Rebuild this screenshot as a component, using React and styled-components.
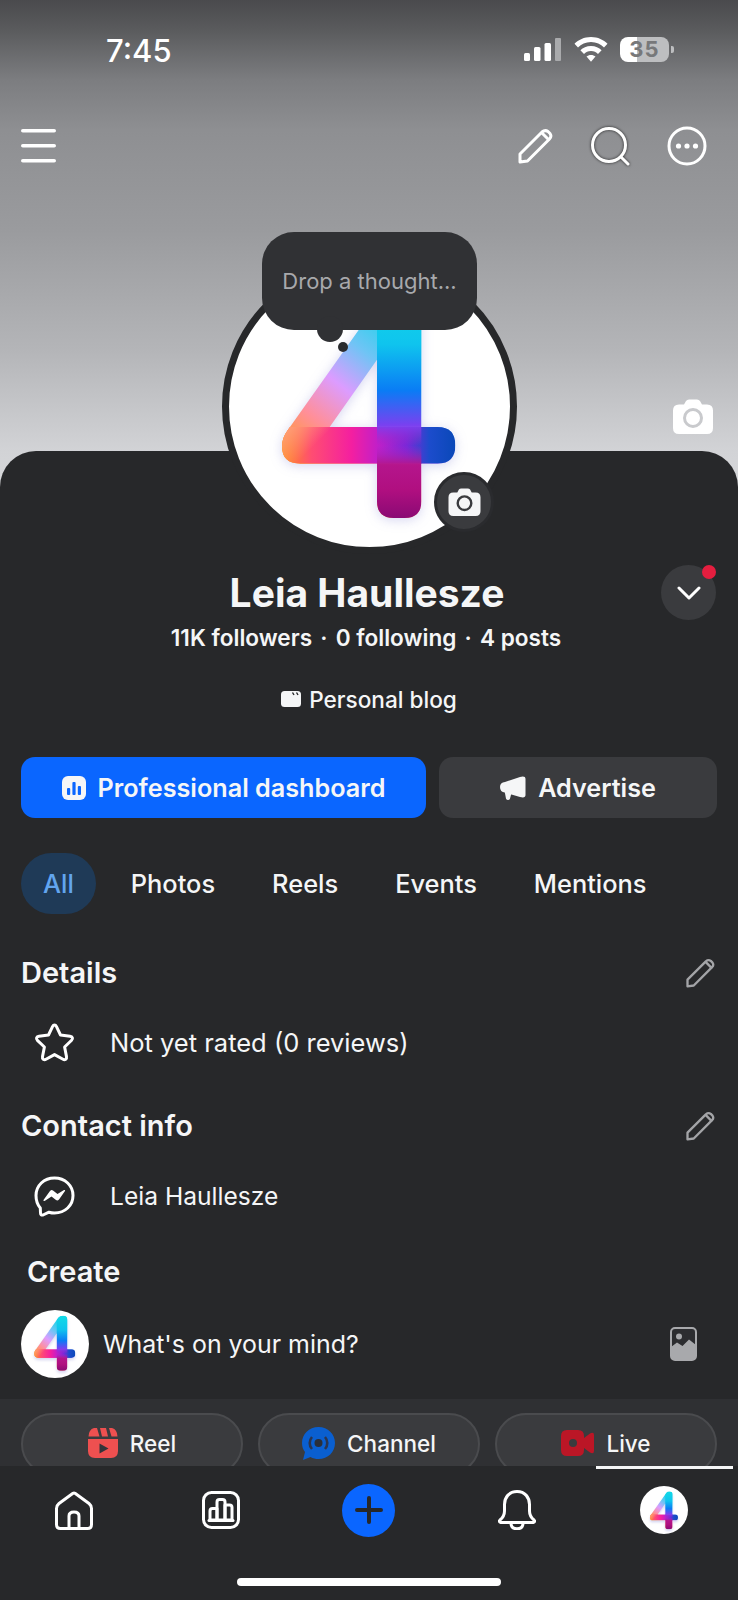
import React, { useId } from "react";
import styled, { createGlobalStyle } from "styled-components";

const SHEET = "#27282a";

const Global = createGlobalStyle`
  html, body { margin: 0; padding: 0; background: ${SHEET}; }
  * { box-sizing: border-box; }
  body { font-family: Inter, "Liberation Sans", sans-serif; -webkit-font-smoothing: antialiased; }
`;

const Page = styled.div`
  position: relative;
  width: 738px;
  height: 1600px;
  overflow: hidden;
  display: flex;
  flex-direction: column;
  background: ${SHEET};
  color: #f5f6f7;
`;

const Hero = styled.header`
  height: 487px;
  flex: none;
  background: linear-gradient(180deg, #4a4a4d 0, #5a5b5d 30px, #7c7d80 80px, #8e8f92 130px, #9a9b9e 230px, #b4b5b8 350px, #d2d3d6 451px, #d6d7da 487px);
`;

const StatusBar = styled.div`
  height: 100px;
  padding: 33px 69px 0 106px;
  display: flex;
  justify-content: space-between;
  align-items: flex-start;
`;

const Time = styled.div`
  font-size: 31px;
  line-height: 36px;
  font-weight: 500;
  color: #fff;
`;

const StatusIcons = styled.div`
  display: flex;
  align-items: flex-start;
  margin-top: 4px;
`;

const Signal = styled.svg`
  width: 38px;
  height: 24px;
  margin-top: 1px;
  margin-right: 13px;
`;

const Wifi = styled.svg`
  width: 34px;
  height: 25px;
  margin-right: 12px;
`;

const Battery = styled.div`
  position: relative;
  width: 49px;
  height: 25px;
  border-radius: 8px;
  background: linear-gradient(90deg, #fff 0, #fff 17px, #bdbec0 17px, #bdbec0 100%);
  color: #77787a;
  font-size: 22px;
  line-height: 25px;
  font-weight: 700;
  text-align: center;
  letter-spacing: 1px;
  &::after {
    content: "";
    position: absolute;
    right: -5px;
    top: 9px;
    width: 3px;
    height: 7px;
    border-radius: 0 2px 2px 0;
    background: #bdbec0;
  }
`;

const Toolbar = styled.div`
  height: 40px;
  padding: 0 31px 0 21px;
  margin-top: 26px;
  display: flex;
  align-items: center;
`;

const ToolIcons = styled.div`
  margin-left: auto;
  display: flex;
  align-items: center;
  gap: 37px;
`;

const SearchSvg = styled.svg`
  width: 40px;
  height: 40px;
  filter: drop-shadow(0 0 1.5px rgba(0, 0, 0, 0.75));
`;

const HeroCamera = styled.div`
  position: absolute;
  left: 673px;
  top: 399px;
`;

const Avatar = styled.div`
  position: absolute;
  left: 222px;
  top: 259px;
  width: 295px;
  height: 295px;
  padding: 0 2px 8px 0;
  border-radius: 50%;
  border: 7px solid ${SHEET};
  background: #fff;
  display: flex;
  align-items: center;
  justify-content: center;
`;

const CameraBadge = styled.div`
  position: absolute;
  left: 205px;
  top: 206px;
  width: 60px;
  height: 60px;
  border-radius: 50%;
  background: #3a3b3e;
  border: 3px solid #2a2b2e;
  display: flex;
  align-items: center;
  justify-content: center;
`;

const Bubble = styled.div`
  position: absolute;
  left: 262px;
  top: 232px;
  width: 215px;
  height: 98px;
  border-radius: 32px;
  background: #303134;
  color: #a8a9ac;
  font-size: 22px;
  display: flex;
  align-items: center;
  justify-content: center;
  &::before {
    content: "";
    position: absolute;
    left: 55px;
    bottom: -12px;
    width: 26px;
    height: 26px;
    border-radius: 50%;
    background: #303134;
  }
  &::after {
    content: "";
    position: absolute;
    left: 76px;
    top: 110px;
    width: 10px;
    height: 10px;
    border-radius: 50%;
    background: #2a2b2e;
  }
`;

const Sheet = styled.main`
  flex: 1;
  position: relative;
  margin-top: -36px;
  border-radius: 36px 36px 0 0;
  background: ${SHEET};
  padding: 119px 21px 0;
  display: flex;
  flex-direction: column;
`;

const NameBlock = styled.div`
  position: relative;
  padding-right: 4px;
  text-align: center;
`;

const Name = styled.h1`
  margin: 0;
  font-size: 39px;
  line-height: 46px;
  font-weight: 700;
  color: #f5f6f7;
`;

const MenuButton = styled.div`
  position: absolute;
  right: 1px;
  top: -5px;
  width: 55px;
  height: 55px;
  border-radius: 50%;
  background: #3a3b3e;
  display: flex;
  align-items: center;
  justify-content: center;
  &::after {
    content: "";
    position: absolute;
    right: 0;
    top: 0;
    width: 14px;
    height: 14px;
    border-radius: 50%;
    background: #e41e3f;
  }
`;

const Stats = styled.div`
  margin-top: 8px;
  padding-right: 6px;
  font-size: 22.6px;
  line-height: 28px;
  font-weight: 600;
  text-align: center;
  white-space: nowrap;
`;

const Sep = styled.span`
  margin: 0 2.5px;
`;

const Category = styled.div`
  margin-top: 33px;
  height: 28px;
  display: flex;
  justify-content: center;
  align-items: center;
  gap: 8px;
  font-size: 22.6px;
  font-weight: 500;
`;

const Actions = styled.div`
  margin-top: 44px;
  display: grid;
  grid-template-columns: 405px 278px;
  gap: 13px;
`;

const ActionButton = styled.div`
  height: 61px;
  border-radius: 14px;
  background: ${(p) => (p.$primary ? "#0a66ff" : "#3a3b3e")};
  display: flex;
  align-items: center;
  justify-content: center;
  gap: 12px;
  font-size: 25.2px;
  font-weight: 600;
  color: #f5f6f7;
`;

const Tabs = styled.nav`
  margin-top: 35px;
  display: flex;
  gap: 13px;
`;

const Tab = styled.div`
  height: 61px;
  padding: 0 22px;
  border-radius: 31px;
  display: flex;
  align-items: center;
  font-size: 25.4px;
  font-weight: 500;
  background: ${(p) => (p.$active ? "#1f3a57" : "transparent")};
  color: ${(p) => (p.$active ? "#62a5ef" : "#f5f6f7")};
`;

const SectionHead = styled.div`
  margin-top: ${(p) => p.$top}px;
  height: 36px;
  padding: 0 2px 0 0;
  display: flex;
  align-items: center;
  justify-content: space-between;
`;

const SectionTitle = styled.h2`
  margin: 0;
  font-size: 29px;
  line-height: 36px;
  font-weight: 600;
  color: #f5f6f7;
`;

const InfoRow = styled.div`
  margin-top: ${(p) => p.$top}px;
  height: 44px;
  padding-left: 13px;
  display: flex;
  align-items: center;
  gap: 35px;
  font-size: ${(p) => p.$fs}px;
  font-weight: 400;
`;

const CreateTitle = styled(SectionTitle)`
  margin-top: 36px;
  padding-left: 6px;
`;

const Composer = styled.div`
  margin-top: 19px;
  height: 69px;
  padding-right: 20px;
  display: flex;
  align-items: center;
  gap: 14px;
  font-size: 24.9px;
`;

const SmallAvatar = styled.div`
  width: ${(p) => p.$size}px;
  height: ${(p) => p.$size}px;
  border-radius: 50%;
  background: #fff;
  display: flex;
  align-items: center;
  justify-content: center;
  flex: none;
`;

const GalleryWrap = styled.div`
  margin-left: auto;
  display: flex;
`;

const Strip = styled.section`
  flex: none;
  height: 67px;
  padding: 14px 21px 0;
  background: #2f3033;
  overflow: hidden;
  display: grid;
  grid-template-columns: repeat(3, 222px);
  gap: 15px;
`;

const Pill = styled.div`
  height: 62px;
  border-radius: 36px;
  background: #3a3b3e;
  border: 2px solid #4a4b4e;
  display: flex;
  align-items: center;
  justify-content: center;
  gap: 12px;
  font-size: 22.5px;
  font-weight: 500;
  padding-bottom: 2px;
`;

const BottomNav = styled.footer`
  position: relative;
  flex: none;
  height: 134px;
  background: ${SHEET};
  &::after {
    content: "";
    position: absolute;
    right: 5px;
    top: 0;
    width: 137px;
    height: 3px;
    background: #f5f6f7;
  }
`;

const NavGrid = styled.div`
  height: 88px;
  display: grid;
  grid-template-columns: repeat(5, 1fr);
`;

const NavItem = styled.div`
  display: flex;
  align-items: center;
  justify-content: center;
`;

const PlusCircle = styled.div`
  width: 53px;
  height: 53px;
  border-radius: 50%;
  background: #0a66ff;
  display: flex;
  align-items: center;
  justify-content: center;
`;

const HomeBar = styled.div`
  width: 264px;
  height: 8px;
  margin: 24px auto 0;
  border-radius: 4px;
  background: #fff;
`;

const FourSvg = styled.svg`
  height: ${(p) => p.$h}px;
  width: ${(p) => (p.$h * 550) / 720}px;
  display: block;
  overflow: visible;
  filter: drop-shadow(0 2px ${(p) => p.$h / 40}px rgba(90, 90, 200, 0.25));
`;

function Four({ h }) {
  const id = "f" + useId().replace(/[^a-zA-Z0-9]/g, "");
  return (
    <FourSvg $h={h} viewBox="230 190 550 720">
      <defs>
        <clipPath id={id + "c"}>
          <path clipRule="evenodd" d="M610 200 Q663 200 663 250 L663 622 L712 622 Q765 622 765 677 Q765 732 712 732 L663 732 L663 845 Q663 895 613 895 L580 895 Q530 895 530 845 L530 732 L300 732 Q245 732 245 680 Q245 655 262 632 L550 225 Q570 200 610 200 Z M388 622 L530 622 L530 420 Z" />
        </clipPath>
        <linearGradient id={id + "s"} x1="0" y1="200" x2="0" y2="895" gradientUnits="userSpaceOnUse">
          <stop offset="0" stopColor="#12dbe6" />
          <stop offset="0.25" stopColor="#0fc4ee" />
          <stop offset="0.45" stopColor="#0a7cf5" />
          <stop offset="0.6" stopColor="#7a40f0" />
          <stop offset="0.687" stopColor="#a028c8" stopOpacity="0" />
          <stop offset="0.77" stopColor="#b5158c" />
          <stop offset="0.88" stopColor="#b00f80" />
          <stop offset="1" stopColor="#8a0a74" />
        </linearGradient>
        <linearGradient id={id + "d"} x1="250" y1="680" x2="560" y2="290" gradientUnits="userSpaceOnUse">
          <stop offset="0" stopColor="#ff9a2e" />
          <stop offset="0.25" stopColor="#ff8f9a" />
          <stop offset="0.5" stopColor="#dc9cff" />
          <stop offset="0.75" stopColor="#6fc4f5" />
          <stop offset="1" stopColor="#20d4ea" />
        </linearGradient>
        <linearGradient id={id + "b"} x1="245" y1="0" x2="765" y2="0" gradientUnits="userSpaceOnUse">
          <stop offset="0" stopColor="#ff8f1f" />
          <stop offset="0.17" stopColor="#ff4d72" />
          <stop offset="0.4" stopColor="#f41fa0" />
          <stop offset="0.55" stopColor="#c21fc8" />
          <stop offset="0.72" stopColor="#7a28d8" />
          <stop offset="0.85" stopColor="#1c4ccc" />
          <stop offset="1" stopColor="#0a48b8" />
        </linearGradient>
        <linearGradient id={id + "p"} x1="300" y1="600" x2="420" y2="720" gradientUnits="userSpaceOnUse">
          <stop offset="0" stopColor="#ffa080" stopOpacity="0.8" />
          <stop offset="0.5" stopColor="#ffa080" stopOpacity="0" />
        </linearGradient>
      </defs>
      <g clipPath={`url(#${id}c)`}>
        <rect x="230" y="190" width="550" height="720" fill={`url(#${id}d)`} />
        <rect x="240" y="622" width="530" height="110" fill={`url(#${id}b)`} />
        <rect x="240" y="622" width="300" height="110" fill={`url(#${id}p)`} />
        <rect x="530" y="190" width="133" height="720" fill={`url(#${id}s)`} />
      </g>
    </FourSvg>
  );
}

const Stroke = styled.svg`
  display: block;
  width: ${(p) => p.$w}px;
  height: ${(p) => p.$h}px;
  fill: none;
  stroke: ${(p) => p.$c || "#fff"};
  stroke-width: ${(p) => p.$sw || 3};
  stroke-linecap: round;
  stroke-linejoin: round;
`;

const Pencil = ({ w = 36, h = 36, c, sw }) => (
  <Stroke $w={w} $h={h} $c={c} $sw={sw} viewBox="0 0 36 36">
    <path d="M3 26 L25 4 Q28 1.5 31 3.5 L33 5.5 Q35 8.5 32.5 11 L10.5 33 L3 34 Z" />
    <path d="M25 5 L31.5 11.5" />
  </Stroke>
);

const Camera = ({ w, h, body, ring }) => (
  <svg width={w} height={h} viewBox="0 0 40 35">
    <path fill={body} d="M6 5.5 H11 L13 2 Q14 0.5 16 0.5 H24 Q26 0.5 27 2 L29 5.5 H34 Q40 5.5 40 11.5 V29 Q40 35 34 35 H6 Q0 35 0 29 V11.5 Q0 5.5 6 5.5 Z" />
    <circle cx="20" cy="19" r="8.5" fill="none" stroke={ring} strokeWidth="3" />
  </svg>
);

export default function App() {
  return (
    <Page>
      <Global />
      <Hero>
        <StatusBar>
          <Time>7:45</Time>
          <StatusIcons>
            <Signal viewBox="0 0 38 24">
              <rect x="1" y="15" width="6" height="8" rx="1.5" fill="#fff" />
              <rect x="11" y="9" width="6.5" height="14" rx="1.5" fill="#fff" />
              <rect x="21.5" y="5" width="6.5" height="18" rx="1.5" fill="#fff" />
              <rect x="32" y="0" width="6" height="23" rx="1" fill="#a9aaac" />
            </Signal>
            <Wifi viewBox="0 0 34 25">
              <path fill="#fff" d="M17 0 C24 0 29.5 2.8 33.5 6.8 L30 10.4 C26.8 7.2 22.4 5 17 5 C11.6 5 7.2 7.2 4 10.4 L0.5 6.8 C4.5 2.8 10 0 17 0 Z" />
              <path fill="#fff" d="M17 9 C21.5 9 25 10.8 27.6 13.3 L24 16.9 C22.2 15.2 20 14 17 14 C14 14 11.8 15.2 10 16.9 L6.4 13.3 C9 10.8 12.5 9 17 9 Z" />
              <path fill="#fff" d="M17 18 C18.8 18 20.3 18.6 21.5 19.6 L17 24.8 L12.5 19.6 C13.7 18.6 15.2 18 17 18 Z" />
            </Wifi>
            <Battery>35</Battery>
          </StatusIcons>
        </StatusBar>
        <Toolbar>
          <svg width="35" height="34" viewBox="0 0 35 34">
            <rect x="0" y="0" width="35" height="3.6" rx="1.8" fill="#fff" />
            <rect x="0" y="15" width="35" height="3.6" rx="1.8" fill="#fff" />
            <rect x="0" y="30" width="35" height="3.6" rx="1.8" fill="#fff" />
          </svg>
          <ToolIcons>
            <Pencil />
            <SearchSvg viewBox="0 0 40 40" fill="none" stroke="#fff" strokeWidth="3" strokeLinecap="round">
              <circle cx="19" cy="19" r="16.5" />
              <path d="M31 31 L38 38" />
            </SearchSvg>
            <Stroke $w={40} $h={40} viewBox="0 0 40 40">
              <circle cx="20" cy="20" r="18" />
              <circle cx="11.5" cy="20" r="2.6" fill="#fff" stroke="none" />
              <circle cx="20" cy="20" r="2.6" fill="#fff" stroke="none" />
              <circle cx="28.5" cy="20" r="2.6" fill="#fff" stroke="none" />
            </Stroke>
          </ToolIcons>
        </Toolbar>
      </Hero>

      <Sheet>
        <NameBlock>
          <Name>Leia Haullesze</Name>
          <MenuButton>
            <Stroke $w={24} $h={14} viewBox="0 0 24 14" $sw={3}>
              <path d="M2 2 L12 12 L22 2" />
            </Stroke>
          </MenuButton>
        </NameBlock>
        <Stats>
          11K followers<Sep> · </Sep>0 following<Sep> · </Sep>4 posts
        </Stats>
        <Category>
          <svg width="20" height="16" viewBox="0 0 20 16">
            <rect width="20" height="16" rx="3.5" fill="#f5f6f7" />
            <path d="M11.5 1.5 L13 4 M15.5 1.5 L17 4" stroke={SHEET} strokeWidth="1.4" />
          </svg>
          Personal blog
        </Category>
        <Actions>
          <ActionButton $primary>
            <svg width="24" height="24" viewBox="0 0 24 24">
              <rect width="24" height="24" rx="6" fill="#f5f6f7" />
              <rect x="5" y="12" width="3.2" height="7" rx="1" fill="#0a66ff" />
              <rect x="10.4" y="6" width="3.2" height="13" rx="1" fill="#0a66ff" />
              <rect x="15.8" y="10" width="3.2" height="9" rx="1" fill="#0a66ff" />
            </svg>
            Professional dashboard
          </ActionButton>
          <ActionButton>
            <svg width="26" height="24" viewBox="0 0 26 24">
              <path fill="#f5f6f7" d="M5 6 L20 1 Q25.5 -0.5 25.5 3 V19 Q25.5 22.5 20 21 L5 16.5 Q0 16 0 11 Q0 6.5 5 6 Z" />
              <path fill="#f5f6f7" d="M4.5 15 L11.5 17 L10 22.5 Q9.5 24 8 24 Q6.5 24 6 22.5 Z" />
            </svg>
            Advertise
          </ActionButton>
        </Actions>
        <Tabs>
          <Tab $active>All</Tab>
          <Tab>Photos</Tab>
          <Tab>Reels</Tab>
          <Tab>Events</Tab>
          <Tab>Mentions</Tab>
        </Tabs>
        <SectionHead $top={41}>
          <SectionTitle>Details</SectionTitle>
          <Pencil w={30} h={30} c="#a3a4a7" sw={2.8} />
        </SectionHead>
        <InfoRow $fs={25.5} $top={29}>
          <Stroke $w={41} $h={39} viewBox="0 0 41 39" $sw={3}>
            <path d="M20.5 2 C21.5 2 22 2.6 22.5 3.6 L26.5 12 L36 13.2 C38.5 13.6 39.3 15.6 37.6 17.3 L30.6 24 L32.5 33.6 C33 36 31 37.4 29 36.3 L20.5 31.6 L12 36.3 C10 37.4 8 36 8.5 33.6 L10.4 24 L3.4 17.3 C1.7 15.6 2.5 13.6 5 13.2 L14.5 12 L18.5 3.6 C19 2.6 19.5 2 20.5 2 Z" />
          </Stroke>
          Not yet rated (0 reviews)
        </InfoRow>
        <SectionHead $top={44}>
          <SectionTitle>Contact info</SectionTitle>
          <Pencil w={30} h={30} c="#a3a4a7" sw={2.8} />
        </SectionHead>
        <InfoRow $fs={24.6} $top={30}>
          <Stroke $w={41} $h={41} viewBox="0 0 41 41" $sw={3}>
            <path d="M20.5 2 C31 2 39 9.5 39 19.5 C39 29.5 31 37 20.5 37 C18.5 37 16.7 36.7 15 36.2 L9 39 C7.5 39.4 6.5 38.6 6.5 37 L6.3 32 C3.5 28.7 2 24.5 2 19.5 C2 9.5 10 2 20.5 2 Z" />
            <path fill="#fff" stroke="none" d="M9.5 24 L16 15 Q17.5 13.5 19 14.5 L23.5 18 L30 14 Q31.5 13.5 31 15 L25 23.5 Q23.5 25 22 24 L17.5 20.5 L11 24.8 Q9 25.5 9.5 24 Z" />
          </Stroke>
          Leia Haullesze
        </InfoRow>
        <CreateTitle>Create</CreateTitle>
        <Composer>
          <SmallAvatar $size={68}>
            <Four h={57} />
          </SmallAvatar>
          What's on your mind?
          <GalleryWrap>
            <svg width="27" height="34" viewBox="0 0 27 34">
              <rect x="1" y="1" width="25" height="32" rx="4" fill="#2c2d30" stroke="#a8a9ac" strokeWidth="2" />
              <circle cx="9" cy="9.5" r="3" fill="#a8a9ac" />
              <path fill="#a8a9ac" d="M1 20 L7 15.5 L12.5 19 L19 12.5 L26 18 V29 Q26 33 22 33 H5 Q1 33 1 29 Z" />
            </svg>
          </GalleryWrap>
        </Composer>
      </Sheet>

      <Strip>
        <Pill>
          <svg width="30" height="30" viewBox="0 0 30 30">
            <path fill="#ee5050" d="M0 11 H30 V23 Q30 30 23 30 H7 Q0 30 0 23 Z" />
            <path fill="#ee5050" d="M6 0 H9 L11.5 8.5 H0.5 Q0.7 1.5 6 0 Z M12 0 H18 L20 8.5 H14 Z M21 0 H24 Q29.3 1.5 29.5 8.5 H23.5 Z" />
            <path fill="#33343a" d="M11.5 15.5 L20.5 20.5 L11.5 25.5 Z" />
          </svg>
          Reel
        </Pill>
        <Pill>
          <svg width="33" height="33" viewBox="0 0 33 33">
            <path fill="#0a5fd0" d="M16.5 0 C26 0 33 7 33 16 C33 25 26 32 16.5 32 C13.5 32 11 31.5 8.5 30 L1 33 L3 25 C1 22.5 0 19.5 0 16 C0 7 7 0 16.5 0 Z" />
            <circle cx="16.5" cy="16" r="4" fill="#2a2f3a" />
            <path d="M10 10 A9 9 0 0 0 10 22 M23 10 A9 9 0 0 1 23 22" fill="none" stroke="#2a3550" strokeWidth="2.6" />
          </svg>
          Channel
        </Pill>
        <Pill>
          <svg width="33" height="26" viewBox="0 0 33 26">
            <path fill="#bb1626" d="M6 0 H17 Q23 0 23 6 V8 L29 3.5 Q33 1.5 33 5 V21 Q33 24.5 29 22.5 L23 18 V20 Q23 26 17 26 H6 Q0 26 0 20 V6 Q0 0 6 0 Z" />
            <circle cx="12" cy="13" r="4" fill="#3a3b3e" />
          </svg>
          Live
        </Pill>
      </Strip>

      <BottomNav>
        <NavGrid>
          <NavItem>
            <Stroke $w={38} $h={39} viewBox="0 0 38 39" $sw={3}>
              <path d="M18 2.2 Q19 1.6 20 2.2 L34 12.5 Q36.5 14.5 36.5 17.5 V33.5 Q36.5 37.5 32.5 37.5 H5.5 Q1.5 37.5 1.5 33.5 V17.5 Q1.5 14.5 4 12.5 Z" />
              <path d="M14 37 V25 Q14 21 19 21 Q24 21 24 25 V37" />
            </Stroke>
          </NavItem>
          <NavItem>
            <Stroke $w={38} $h={38} viewBox="0 0 38 38" $sw={3}>
              <rect x="1.5" y="1.5" width="35" height="35" rx="8" />
              <path d="M8 29 V20 Q8 17.5 10.5 17.5 H15 V29 Z" />
              <path d="M15 29 V11 Q15 8.5 17.5 8.5 H20.5 Q23 8.5 23 11 V29 Z" />
              <path d="M23 29 V14 H27.5 Q30 14 30 16.5 V29 Z" />
              <path d="M7 29.5 H31" />
            </Stroke>
          </NavItem>
          <NavItem>
            <PlusCircle>
              <Stroke $w={30} $h={30} viewBox="0 0 30 30" $c={SHEET} $sw={4}>
                <path d="M15 3 V27 M3 15 H27" />
              </Stroke>
            </PlusCircle>
          </NavItem>
          <NavItem>
            <Stroke $w={38} $h={40} viewBox="0 0 38 40" $sw={3}>
              <path d="M19 1.5 C27 1.5 31.5 7.5 31.5 14.5 V21 C31.5 25 33.5 28 36 30 Q37.5 31.5 35.5 32.5 H2.5 Q0.5 31.5 2 30 C4.5 28 6.5 25 6.5 21 V14.5 C6.5 7.5 11 1.5 19 1.5 Z" />
              <path d="M13 33 C13 37 15.5 38.8 19 38.8 C22.5 38.8 25 37 25 33" />
            </Stroke>
          </NavItem>
          <NavItem>
            <SmallAvatar $size={48}>
              <Four h={39} />
            </SmallAvatar>
          </NavItem>
        </NavGrid>
        <HomeBar />
      </BottomNav>

      <HeroCamera>
        <Camera w={40} h={35} body="#ffffff" ring="#c9cacd" />
      </HeroCamera>
      <Avatar>
        <Four h={240} />
        <CameraBadge>
          <Camera w={33} h={28} body="#f5f6f7" ring="#3a3b3e" />
        </CameraBadge>
      </Avatar>
      <Bubble>Drop a thought...</Bubble>
    </Page>
  );
}
